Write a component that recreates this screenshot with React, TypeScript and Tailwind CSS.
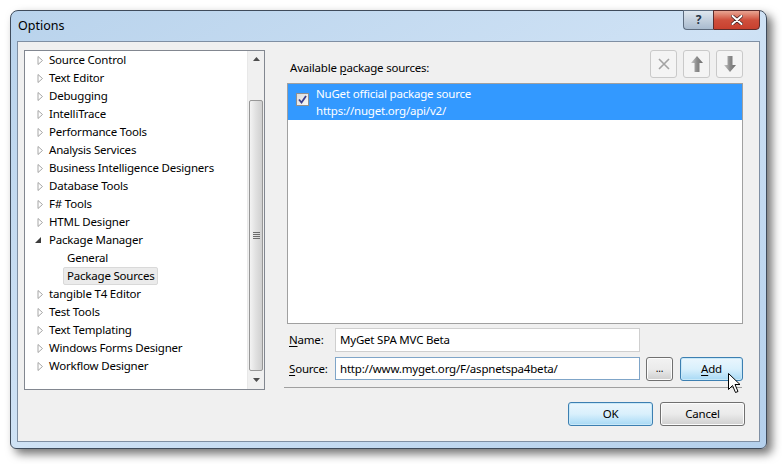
type TreeItem = {
  label: string;
  kind?: "collapsed" | "expanded" | "child";
  selected?: boolean;
};

const tree: TreeItem[] = [
  { label: "Source Control" },
  { label: "Text Editor" },
  { label: "Debugging" },
  { label: "IntelliTrace" },
  { label: "Performance Tools" },
  { label: "Analysis Services" },
  { label: "Business Intelligence Designers" },
  { label: "Database Tools" },
  { label: "F# Tools" },
  { label: "HTML Designer" },
  { label: "Package Manager", kind: "expanded" },
  { label: "General", kind: "child" },
  { label: "Package Sources", kind: "child", selected: true },
  { label: "tangible T4 Editor" },
  { label: "Test Tools" },
  { label: "Text Templating" },
  { label: "Windows Forms Designer" },
  { label: "Workflow Designer" },
];

function Arrow({ expanded }: { expanded?: boolean }) {
  if (expanded) {
    return (
      <svg width="8" height="8" viewBox="0 0 8 8" className="ml-[10px] mr-[6px]">
        <path d="M6 1 L6 7 L0 7 Z" fill="#3c3c3c" />
      </svg>
    );
  }
  return (
    <svg width="7" height="9" viewBox="0 0 7 9" className="ml-[12px] mr-[5px]">
      <path d="M1 0.5 L5.5 4.5 L1 8.5 Z" fill="#fff" stroke="#a6a6a6" />
    </svg>
  );
}

function TreeView() {
  return (
    <div className="w-[241px] h-[340px] border border-[#828790] bg-white flex">
      <div className="flex-1 flex flex-col">
        {tree.map((it) => (
          <div key={it.label} className="h-[18px] flex items-center shrink-0">
            {it.kind === "child" ? (
              <span
                className={
                  "ml-[38px] px-[3px] h-[18px] leading-[16px] rounded-[2px] " +
                  (it.selected
                    ? "border border-[#d9d9d9] bg-[#ebebeb]"
                    : "border border-transparent")
                }
              >
                {it.label}
              </span>
            ) : (
              <>
                <Arrow expanded={it.kind === "expanded"} />
                <span>{it.label}</span>
              </>
            )}
          </div>
        ))}
      </div>
      <div className="w-[17px] flex flex-col bg-[#f0f0f0] border-l border-[#e8e8e8]">
        <div className="h-[16px] flex items-center justify-center">
          <svg width="7" height="4" viewBox="0 0 7 4">
            <path d="M0 4 L3.5 0 L7 4 Z" fill="#4d4d4d" />
          </svg>
        </div>
        <div className="mt-[33px] mx-[1px] h-[271px] rounded-[2px] border border-[#979797] bg-gradient-to-r from-[#f3f3f3] via-[#e0e0e0] to-[#d0d0d0] flex items-center justify-center">
          <div className="flex flex-col gap-[1px]">
            <div className="w-[7px] h-[1px] bg-[#6b6b6b]" />
            <div className="w-[7px] h-[1px] bg-[#6b6b6b]" />
            <div className="w-[7px] h-[1px] bg-[#6b6b6b]" />
            <div className="w-[7px] h-[1px] bg-[#6b6b6b]" />
          </div>
        </div>
        <div className="flex-1 flex items-center justify-center">
          <svg width="7" height="4" viewBox="0 0 7 4">
            <path d="M0 0 L3.5 4 L7 0 Z" fill="#4d4d4d" />
          </svg>
        </div>
      </div>
    </div>
  );
}

function ToolButton({ children }: { children: React.ReactNode }) {
  return (
    <div className="w-[27px] h-[28px] rounded-[3px] border border-[#c9c9c9] bg-[#f4f4f4] flex items-center justify-center">
      {children}
    </div>
  );
}

function WinButton({
  children,
  w,
  focused,
}: {
  children: React.ReactNode;
  w: string;
  focused?: boolean;
}) {
  return (
    <div
      className={
        w +
        " h-[24px] rounded-[3px] border flex items-center justify-center " +
        (focused
          ? "border-[#3c7fb1] bg-gradient-to-b from-[#eaf6fd] via-[#d9f0fc] to-[#a7d9f5] shadow-[inset_0_0_0_1px_#c8e8f8]"
          : "border-[#707070] bg-gradient-to-b from-[#f2f2f2] via-[#ebebeb] to-[#cfcfcf] shadow-[inset_0_0_0_1px_#fcfcfc]")
      }
    >
      {children}
    </div>
  );
}

export default function App() {
  return (
    <div className="w-[782px] h-[464px] bg-white pl-[10px] pt-[10px] font-['Noto_Sans',sans-serif] text-[11.5px] tracking-[-0.2px] text-black relative overflow-hidden">
      <div className="w-[757px] h-[439px] rounded-t-[8px] rounded-b-[6px] border border-[#3f4b5b] bg-gradient-to-br from-[#b9d3ec] via-[#cfe2f5] to-[#b4d0ec] shadow-[5px_5px_10px_rgba(0,0,0,0.55)] flex flex-col px-[6px] pb-[6px]">
        <div className="h-[30px] flex items-start justify-between shrink-0">
          <div className="pl-[1px] pt-[6px] text-[12.5px] tracking-normal text-black">Options</div>
          <div className="flex -mt-[1px]">
            <div className="w-[30px] h-[20px] rounded-bl-[4px] border border-[#5c6b7e] border-r-0 bg-gradient-to-b from-[#dfe7ef] via-[#c3d0de] to-[#a9bbcf] flex items-center justify-center text-[#263546] font-bold text-[12px] leading-none">
              ?
            </div>
            <div className="w-[47px] h-[20px] rounded-br-[4px] border border-[#5c2c2c] bg-gradient-to-b from-[#e8a593] via-[#cf4f3c] to-[#c8402e] flex items-center justify-center">
              <svg width="12" height="10" viewBox="0 0 12 10">
                <path d="M1.5 1 L10.5 9 M10.5 1 L1.5 9" stroke="#3b1d1d" strokeWidth="3.4" strokeLinecap="round" />
                <path d="M1.5 1 L10.5 9 M10.5 1 L1.5 9" stroke="#fff" strokeWidth="2" strokeLinecap="round" />
              </svg>
            </div>
          </div>
        </div>
        <div className="flex-1 border border-[#7f8fa3] bg-[#f0f0f0] flex pl-[6px] pt-[8px]">
          <TreeView />
          <div className="ml-[19px] w-[461px] flex flex-col">
            <div className="h-[33px] flex justify-between shrink-0">
              <div className="pl-[6px] pt-[9px]">
                Available <span className="underline underline-offset-2">p</span>ackage sources:
              </div>
              <div className="flex gap-[6px] pt-[0px] pr-[2px]">
                <ToolButton>
                  <svg width="14" height="14" viewBox="0 0 14 14">
                    <path d="M2 2 L12 12 M12 2 L2 12" stroke="#a3a3a3" strokeWidth="1.6" />
                  </svg>
                </ToolButton>
                <ToolButton>
                  <svg width="14" height="18" viewBox="0 0 14 18">
                    <defs>
                      <linearGradient id="ga" x1="0" y1="0" x2="1" y2="0">
                        <stop offset="0" stopColor="#c8c8c8" />
                        <stop offset="0.5" stopColor="#8a8a8a" />
                        <stop offset="1" stopColor="#6e6e6e" />
                      </linearGradient>
                    </defs>
                    <path d="M7 1 L13 8 L9.5 8 L9.5 17 L4.5 17 L4.5 8 L1 8 Z" fill="url(#ga)" />
                  </svg>
                </ToolButton>
                <ToolButton>
                  <svg width="14" height="18" viewBox="0 0 14 18">
                    <path d="M7 17 L13 10 L9.5 10 L9.5 1 L4.5 1 L4.5 10 L1 10 Z" fill="url(#ga)" />
                  </svg>
                </ToolButton>
              </div>
            </div>
            <div className="ml-[3px] w-[456px] h-[241px] border border-[#a0a0a0] bg-white shrink-0">
              <div className="h-[36px] bg-[#3399ff] text-white flex">
                <div className="pl-[8px] pt-[9px]">
                  <div className="w-[13px] h-[13px] border border-[#8f8f8f] bg-gradient-to-br from-[#dcdcdc] to-[#f8f8f8] flex items-center justify-center">
                    <svg width="9" height="9" viewBox="0 0 9 9">
                      <path d="M1 4.5 L3.5 7.5 L8 1" stroke="#3a3f8f" strokeWidth="1.8" fill="none" />
                    </svg>
                  </div>
                </div>
                <div className="pl-[7px] pt-[1px] leading-[17px]">
                  <div>NuGet official package source</div>
                  <div>https://nuget.org/api/v2/</div>
                </div>
              </div>
            </div>
            <div className="mt-[4px] h-[24px] flex items-center shrink-0">
              <div className="w-[51px] pl-[5px]">
                <span className="underline underline-offset-2">N</span>ame:
              </div>
              <div className="w-[305px] h-[24px] border border-[#cfcfcf] bg-white pl-[4px] flex items-center">
                MyGet SPA MVC Beta
              </div>
            </div>
            <div className="mt-[5px] h-[23px] flex items-center shrink-0">
              <div className="w-[51px] pl-[5px]">
                <span className="underline underline-offset-2">S</span>ource:
              </div>
              <div className="w-[305px] h-[23px] border border-[#7fa5c8] bg-white pl-[4px] flex items-center">
                http://www.myget.org/F/aspnetspa4beta/
              </div>
              <div className="ml-[6px]">
                <WinButton w="w-[27px]">
                  <span className="text-[10px] leading-none pb-[2px]">...</span>
                </WinButton>
              </div>
              <div className="ml-[7px]">
                <WinButton w="w-[63px]" focused>
                  <span>
                    <span className="underline underline-offset-2">A</span>dd
                  </span>
                </WinButton>
              </div>
            </div>
            <div className="mt-[7px] h-[1px] w-[458px] bg-[#a0a0a0] shrink-0" />
            <div className="mt-[14px] flex justify-end gap-[7px] shrink-0">
              <WinButton w="w-[85px]" focused>
                OK
              </WinButton>
              <WinButton w="w-[85px]">Cancel</WinButton>
            </div>
          </div>
        </div>
      </div>
      <svg
        width="13"
        height="21"
        viewBox="0 0 13 21"
        className="absolute left-[728px] top-[373px]"
      >
        <path
          d="M0.5 0.5 L0.5 16.5 L4.5 12.5 L7.5 19.5 L10 18.5 L7 11.5 L12 11.5 Z"
          fill="#fff"
          stroke="#000"
        />
      </svg>
    </div>
  );
}
